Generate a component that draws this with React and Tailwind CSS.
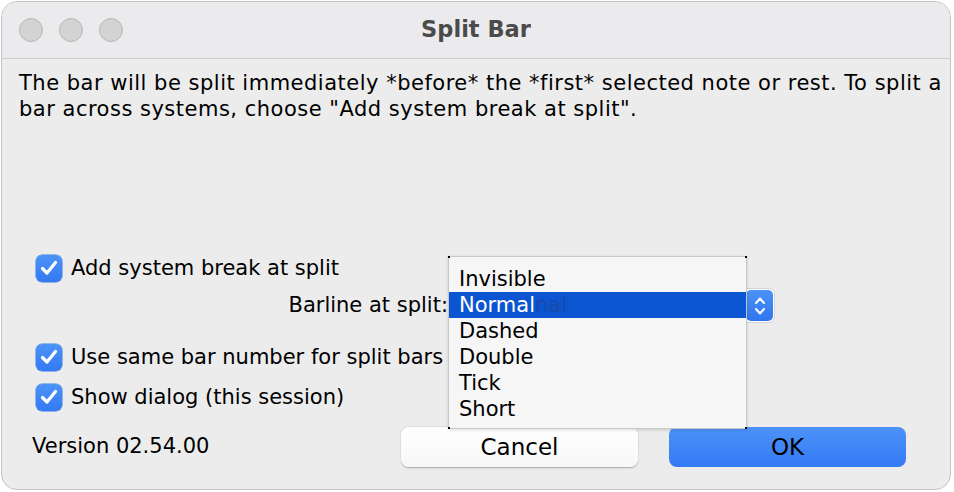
import React from "react";

const font = { fontFamily: '"DejaVu Sans", "Noto Sans", sans-serif' };

const Check = () => (
  <span className="w-[26px] h-[27px] rounded-[6px] bg-gradient-to-b from-[#4c93f7] to-[#3479f2] flex items-center justify-center shadow-[0_0_0_0.5px_#3a7de0] shrink-0">
    <svg width="18" height="16" viewBox="0 0 18 16">
      <path
        d="M2.5 8.5 L7 13 L15.5 2.5"
        fill="none"
        stroke="white"
        strokeWidth="3.2"
        strokeLinecap="round"
        strokeLinejoin="round"
      />
    </svg>
  </span>
);

const CheckRow = ({ label }) => (
  <div className="flex items-center h-[28px] pl-[34px] gap-[9px]">
    <Check />
    <span className="text-[21px] text-black leading-none whitespace-nowrap">{label}</span>
  </div>
);

const items = ["Invisible", "Normal", "Dashed", "Double", "Tick", "Short"];

export default function App() {
  return (
    <div className="w-[954px] h-[492px] bg-white" style={font}>
      <div className="relative ml-[1px] mt-[1px] w-[950px] h-[489px] rounded-[16px] border border-[#c4c4c4] bg-[#ececec] overflow-hidden flex flex-col">
        {/* title bar */}
        <div className="relative h-[57px] border-b border-[#cfcfcf] bg-[#ebebed] flex items-center shrink-0">
          <div className="flex gap-[16px] pl-[17px]">
            <span className="w-[24px] h-[24px] rounded-full bg-[#d3d3d3] border border-[#b8b8b8]" />
            <span className="w-[24px] h-[24px] rounded-full bg-[#d3d3d3] border border-[#b8b8b8]" />
            <span className="w-[24px] h-[24px] rounded-full bg-[#d3d3d3] border border-[#b8b8b8]" />
          </div>
          <div className="absolute inset-0 flex items-center justify-center text-[22.5px] font-bold text-[#4b4b4b]">
            Split Bar
          </div>
        </div>

        {/* message */}
        <p className="mt-[11px] pl-[17px] pr-[4px] text-[21px] leading-[26px] tracking-[0.5px] text-black whitespace-nowrap">
          The bar will be split immediately *before* the *first* selected note or rest. To split a
          <br />
          bar across systems, choose "Add system break at split".
        </p>

        <div className="mt-[132px]">
          <CheckRow label="Add system break at split" />
          <div className="flex items-center mt-[6px] h-[35px]">
            <span className="w-[446px] text-right text-[21px] text-black leading-none whitespace-nowrap">
              Barline at split:
            </span>
            <div className="w-[327px] h-[35px] rounded-[6px] bg-white border border-[#d4d4d4] flex items-center justify-end pr-[1px]">
              <span className="w-[27px] h-[31px] rounded-[5px] bg-gradient-to-b from-[#4c93f7] to-[#2f74ee] flex items-center justify-center">
                <svg width="14" height="24" viewBox="0 0 14 24">
                  <path d="M3 9 L7 4.5 L11 9" fill="none" stroke="white" strokeWidth="2" strokeLinecap="round" strokeLinejoin="round" />
                  <path d="M3 15 L7 19.5 L11 15" fill="none" stroke="white" strokeWidth="2" strokeLinecap="round" strokeLinejoin="round" />
                </svg>
              </span>
            </div>
          </div>
          <div className="mt-[20px] flex flex-col gap-[12px]">
            <CheckRow label="Use same bar number for split bars" />
            <CheckRow label="Show dialog (this session)" />
          </div>
        </div>

        {/* bottom row */}
        <div className="mt-[16px] flex items-center">
          <span className="pl-[30px] w-[399px] text-[21px] text-black whitespace-nowrap">Version 02.54.00</span>
          <button className="w-[237px] h-[40px] rounded-[8px] bg-gradient-to-b from-white to-[#f7f7f7] shadow-[0_0.5px_1.5px_rgba(0,0,0,0.3)] text-[23px] text-black">
            Cancel
          </button>
          <button className="ml-[31px] w-[237px] h-[40px] rounded-[8px] bg-gradient-to-b from-[#4d92f7] to-[#3479f5] text-[23px] text-black">
            OK
          </button>
        </div>

        {/* popup menu */}
        <div className="absolute left-[446px] top-[254px] w-[299px] h-[173px] bg-[#f6f6f6] border border-[#c8c8c8] pt-[9px] shadow-[0_1px_3px_rgba(0,0,0,0.15)]">
          {items.map((it) => (
            <div
              key={it}
              className={`h-[26px] flex items-center pl-[10px] text-[21px] leading-none ${
                it === "Normal" ? "bg-[#0b55d2] text-white" : "text-black"
              }`}
            >
              {it}
              {it === "Normal" && (
                <span className="text-[#1a4aa6]">nal</span>
              )}
            </div>
          ))}
          <span className="absolute -left-[1px] -top-[1px] w-[2px] h-[2px] bg-black" />
          <span className="absolute -right-[1px] -top-[1px] w-[2px] h-[2px] bg-black" />
          <span className="absolute -left-[1px] -bottom-[1px] w-[2px] h-[2px] bg-black" />
          <span className="absolute -right-[1px] -bottom-[1px] w-[2px] h-[2px] bg-black" />
        </div>
      </div>
    </div>
  );
}
